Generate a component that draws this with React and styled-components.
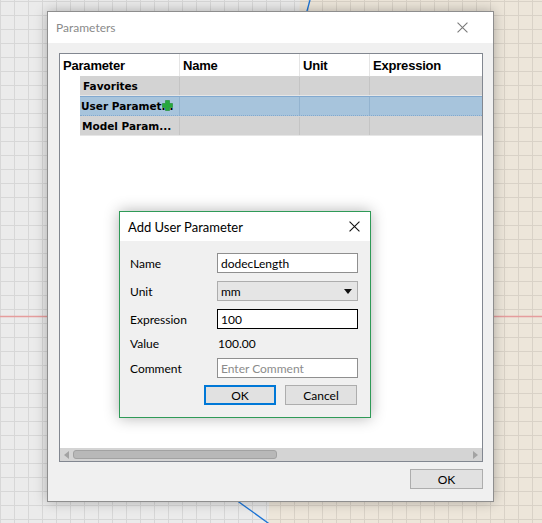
import React from "react";
import styled, { createGlobalStyle } from "styled-components";

const GlobalStyle = createGlobalStyle`
  html, body { margin: 0; padding: 0; }
  body { font-family: Lato, "Liberation Sans", sans-serif; color: #000; }
`;

const Canvas = styled.div`
  position: relative;
  width: 542px;
  height: 523px;
  overflow: hidden;
  background: #ebebeb;
`;

const CanvasArt = styled.svg`
  position: absolute;
  left: 0;
  top: 0;
`;

const Window = styled.div`
  position: absolute;
  left: 47px;
  top: 11px;
  width: 447px;
  height: 491px;
  box-sizing: border-box;
  border: 1px solid #8e8e8e;
  background: #f0f0f0;
  box-shadow: 0 0 12px rgba(0, 0, 0, 0.28);
  display: flex;
  flex-direction: column;
`;

const TitleBar = styled.div`
  height: ${(p) => p.$h}px;
  flex-shrink: 0;
  background: #fff;
  display: flex;
  align-items: center;
  justify-content: space-between;
  padding: 0 ${(p) => p.$pr}px 0 8px;
  font-size: ${(p) => p.$fs || 12}px;
  color: ${(p) => (p.$inactive ? "#8a8a8a" : "#000")};
`;

const Body = styled.div`
  flex: 1;
  display: flex;
  flex-direction: column;
  padding: 10px 10px 12px 11px;
  min-height: 0;
`;

const Frame = styled.div`
  flex: 1;
  border: 1px solid #828790;
  background: #fff;
  display: flex;
  flex-direction: column;
`;

const HeaderRow = styled.div`
  display: grid;
  grid-template-columns: 120px 120px 70px 1fr;
  height: 22px;
`;

const HeaderCell = styled.div`
  border-right: 1px solid #e5e5e5;
  padding-left: 3px;
  display: flex;
  align-items: center;
  font-family: "Liberation Sans", Arial, sans-serif;
  font-weight: bold;
  font-size: 13px;
  letter-spacing: -0.2px;
  &:last-child { border-right: none; }
`;

const TreeRow = styled.div`
  margin-left: 20px;
  display: grid;
  grid-template-columns: 100px 120px 70px 1fr;
  height: 20px;
  box-sizing: border-box;
  background: ${(p) => (p.$selected ? "#a7c4dc" : "#d3d3d3")};
  border-top: 1px solid ${(p) => (p.$selected ? "#82a9cf" : "transparent")};
  border-bottom: 1px ${(p) => (p.$selected ? "dotted #82a9cf" : "solid #e6e6e6")};
`;

const TreeCell = styled.div`
  position: relative;
  border-right: 1px solid ${(p) => (p.$selected ? "#93b3cf" : "#c4c4c4")};
  padding-left: ${(p) => p.$pl || 0}px;
  display: flex;
  align-items: center;
  font-family: "DejaVu Sans", Verdana, sans-serif;
  font-weight: bold;
  font-size: 10.5px;
  white-space: nowrap;
  overflow: hidden;
  &:last-child { border-right: none; }
`;

const PlusIcon = styled.svg`
  position: absolute;
  left: 82px;
  top: 3px;
`;

const Spacer = styled.div`
  flex: 1;
`;

const HScroll = styled.div`
  height: 13px;
  background: #d4d4d4;
  display: flex;
  align-items: center;
  padding: 0 4px;
  gap: 4px;
`;

const ScrollThumb = styled.div`
  width: 204px;
  height: 9px;
  box-sizing: border-box;
  border: 1px solid #a2a2a2;
  border-radius: 3px;
  background: #b8b8b8;
`;

const Footer = styled.div`
  display: flex;
  justify-content: flex-end;
  margin-top: 7px;
`;

const Button = styled.div`
  width: ${(p) => p.$w || 72}px;
  height: 20px;
  box-sizing: border-box;
  border: ${(p) => (p.$default ? "2px solid #0078d7" : "1px solid #adadad")};
  background: #e1e1e1;
  display: flex;
  align-items: center;
  justify-content: center;
  font-size: 12px;
`;

const Dialog = styled.div`
  position: absolute;
  left: 119px;
  top: 211px;
  width: 252px;
  height: 207px;
  box-sizing: border-box;
  border: 1px solid #2f9a57;
  background: #f0f0f0;
  box-shadow: 0 0 14px rgba(0, 0, 0, 0.3);
  display: flex;
  flex-direction: column;
`;

const FormGrid = styled.div`
  display: grid;
  grid-template-columns: 87px 141px;
  grid-template-rows: 20px 20px 20px 13px 20px;
  row-gap: 8px;
  padding: 12px 0 0 10px;
  font-size: 12px;
`;

const Label = styled.div`
  display: flex;
  align-items: center;
`;

const Field = styled.div`
  box-sizing: border-box;
  height: 20px;
  border: 1px solid ${(p) => (p.$focused ? "#000" : "#8f8f8f")};
  background: #fff;
  padding-left: 3px;
  display: flex;
  align-items: center;
  color: ${(p) => (p.$placeholder ? "#8c8c8c" : "#000")};
`;

const Select = styled.div`
  box-sizing: border-box;
  height: 20px;
  border: 1px solid #adadad;
  background: #e5e5e5;
  padding: 0 5px 0 3px;
  display: flex;
  align-items: center;
  justify-content: space-between;
`;

const ValueText = styled.div`
  display: flex;
  align-items: center;
  padding-left: 1px;
`;

const DialogButtons = styled.div`
  display: flex;
  justify-content: flex-end;
  gap: 9px;
  margin: 7px 13px 0 0;
`;

function CloseX({ size, color }) {
  return (
    <svg width={size} height={size} viewBox="0 0 10 10">
      <path d="M0.5 0.5 L9.5 9.5 M9.5 0.5 L0.5 9.5" stroke={color} strokeWidth="1" />
    </svg>
  );
}

function Background() {
  return (
    <CanvasArt width="542" height="523" viewBox="0 0 542 523">
      <defs>
        <pattern id="grid" width="14" height="14" patternUnits="userSpaceOnUse" y="1">
          <path d="M0 0 H14 M0 0 V14" stroke="rgba(0,0,0,0.085)" strokeWidth="1" fill="none" transform="translate(0.5 0.5)" />
        </pattern>
      </defs>
      <rect width="542" height="523" fill="#ebebeb" />
      <polygon points="300,0 542,0 542,523 268,523" fill="#ede6da" />
      <rect width="542" height="523" fill="url(#grid)" />
      <line x1="0" y1="316.5" x2="542" y2="316.5" stroke="#e59d9d" strokeWidth="1.5" />
      <line x1="310" y1="0" x2="299" y2="40" stroke="#1a73d6" strokeWidth="1.3" />
      <line x1="225" y1="492" x2="275" y2="528" stroke="#1a73d6" strokeWidth="1.3" />
    </CanvasArt>
  );
}

export default function App() {
  return (
    <>
      <GlobalStyle />
      <Canvas>
        <Background />
        <Window>
          <TitleBar $h={31} $pr={25} $inactive>
            <span>Parameters</span>
            <CloseX size={11} color="#7a7a7a" />
          </TitleBar>
          <Body>
            <Frame>
              <HeaderRow>
                <HeaderCell>Parameter</HeaderCell>
                <HeaderCell>Name</HeaderCell>
                <HeaderCell>Unit</HeaderCell>
                <HeaderCell>Expression</HeaderCell>
              </HeaderRow>
              <TreeRow>
                <TreeCell $pl={3}>Favorites</TreeCell>
                <TreeCell />
                <TreeCell />
                <TreeCell />
              </TreeRow>
              <TreeRow $selected>
                <TreeCell $pl={1} $selected>
                  User Paramet...
                  <PlusIcon width="11" height="11" viewBox="0 0 11 11">
                    <path
                      d="M3.5 0.5 H7.5 V3.5 H10.5 V7.5 H7.5 V10.5 H3.5 V7.5 H0.5 V3.5 H3.5 Z"
                      fill="#25a83c"
                      stroke="#1d8a30"
                      strokeWidth="0.6"
                    />
                  </PlusIcon>
                </TreeCell>
                <TreeCell $selected />
                <TreeCell $selected />
                <TreeCell $selected />
              </TreeRow>
              <TreeRow>
                <TreeCell $pl={2}>Model Param...</TreeCell>
                <TreeCell />
                <TreeCell />
                <TreeCell />
              </TreeRow>
              <Spacer />
              <HScroll>
                <svg width="5" height="8" viewBox="0 0 5 8">
                  <path d="M5 0 L0 4 L5 8 Z" fill="#a3a3a3" />
                </svg>
                <ScrollThumb />
                <Spacer />
                <svg width="5" height="8" viewBox="0 0 5 8">
                  <path d="M0 0 L5 4 L0 8 Z" fill="#a3a3a3" />
                </svg>
              </HScroll>
            </Frame>
            <Footer>
              <Button $w={73}>OK</Button>
            </Footer>
          </Body>
        </Window>

        <Dialog>
          <TitleBar $h={29} $pr={10} $fs={13}>
            <span>Add User Parameter</span>
            <CloseX size={11} color="#111" />
          </TitleBar>
          <FormGrid>
            <Label>Name</Label>
            <Field>dodecLength</Field>
            <Label>Unit</Label>
            <Select>
              <span>mm</span>
              <svg width="8" height="5" viewBox="0 0 8 5">
                <path d="M0 0 H8 L4 5 Z" fill="#111" />
              </svg>
            </Select>
            <Label>Expression</Label>
            <Field $focused>100</Field>
            <Label>Value</Label>
            <ValueText>100.00</ValueText>
            <Label>Comment</Label>
            <Field $placeholder>Enter Comment</Field>
          </FormGrid>
          <DialogButtons>
            <Button $default>OK</Button>
            <Button>Cancel</Button>
          </DialogButtons>
        </Dialog>
      </Canvas>
    </>
  );
}
